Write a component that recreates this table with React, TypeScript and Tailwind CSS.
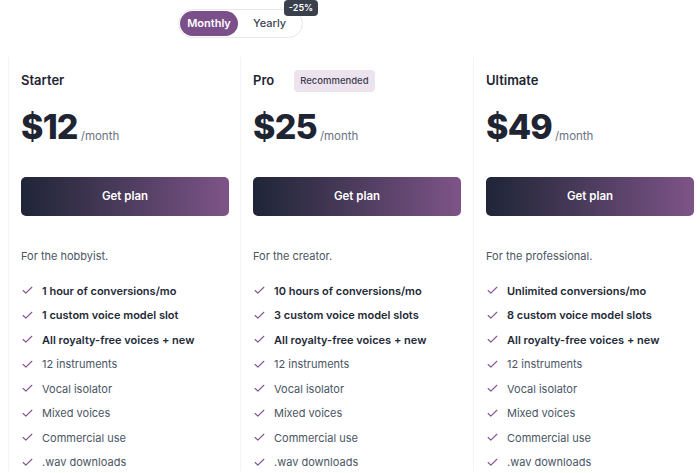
import { Check } from 'lucide-react';

const plans = [
  {
    name: 'Starter',
    price: '$12',
    tagline: 'For the hobbyist.',
    bold: ['1 hour of conversions/mo', '1 custom voice model slot', 'All royalty-free voices + new'],
  },
  {
    name: 'Pro',
    price: '$25',
    recommended: true,
    tagline: 'For the creator.',
    bold: ['10 hours of conversions/mo', '3 custom voice model slots', 'All royalty-free voices + new'],
  },
  {
    name: 'Ultimate',
    price: '$49',
    tagline: 'For the professional.',
    bold: ['Unlimited conversions/mo', '8 custom voice model slots', 'All royalty-free voices + new'],
  },
];

const extras = ['12 instruments', 'Vocal isolator', 'Mixed voices', 'Commercial use', '.wav downloads'];

export default function App() {
  return (
    <div className="h-[473px] w-[700px] overflow-hidden bg-white font-['Inter',sans-serif] text-[#1f2433]">
      {/* Billing toggle */}
      <div className="flex pl-[178px] pt-[9px]">
        <div className="relative flex h-[29px] items-center rounded-full border border-gray-200 bg-white px-[1px]">
          <button className="h-[25px] w-[58px] rounded-full bg-[#7b4f8a] text-[11px] font-semibold text-white">
            Monthly
          </button>
          <button className="h-[25px] px-[15px] text-[11px] font-medium text-[#3b4050]">Yearly</button>
          <span className="absolute right-[-16px] top-[-10px] rounded-[4px] bg-[#3a3f4c] px-[5px] py-[1px] text-[9px] font-semibold text-white">
            -25%
          </span>
        </div>
      </div>

      {/* Plans */}
      <div className="mt-[19px] flex pl-[8px]">
        {plans.map((plan, i) => (
          <div
            key={plan.name}
            className={`flex flex-col border-l border-gray-100 pt-[13px] ${i === 0 ? 'w-[232px] pl-[12px] pr-[12px]' : i === 1 ? 'w-[233px] pl-[12px] pr-[12px]' : 'w-[227px] pl-[12px]'}`}
          >
            <div className="flex h-[22px] items-center gap-[20px]">
              <h3 className="text-[13px] font-semibold">{plan.name}</h3>
              {plan.recommended && (
                <span className="rounded-[4px] bg-[#ede3ee] px-[6px] py-[4px] text-[9.5px] font-medium text-[#3b4050]">
                  Recommended
                </span>
              )}
            </div>

            <div className="mt-[15px] flex items-end gap-[3px]">
              <span className="text-[34px] font-extrabold leading-[40px] tracking-[-0.8px]">{plan.price}</span>
              <span className="mb-[2px] text-[11.5px] text-gray-500">/month</span>
            </div>

            <button className="mt-[30px] h-[39px] w-[208px] rounded-[5px] bg-gradient-to-r from-[#1f2537] to-[#7e5488] text-[11.5px] font-semibold text-white">
              Get plan
            </button>

            <p className="mt-[32px] text-[11px] text-gray-600">{plan.tagline}</p>

            <ul className="mt-[18px] flex flex-col gap-[8px]">
              {plan.bold.map((f) => (
                <li key={f} className="flex h-[16.5px] items-center gap-[8px] text-[11px] font-semibold text-[#242a38]">
                  <Check className="h-[13px] w-[13px] text-[#834f93]" strokeWidth={2} />
                  {f}
                </li>
              ))}
              {extras.map((f) => (
                <li key={f} className="flex h-[16.5px] items-center gap-[8px] text-[11px] text-gray-600">
                  <Check className="h-[13px] w-[13px] text-[#834f93]" strokeWidth={2} />
                  {f}
                </li>
              ))}
            </ul>
          </div>
        ))}
      </div>
    </div>
  );
}
